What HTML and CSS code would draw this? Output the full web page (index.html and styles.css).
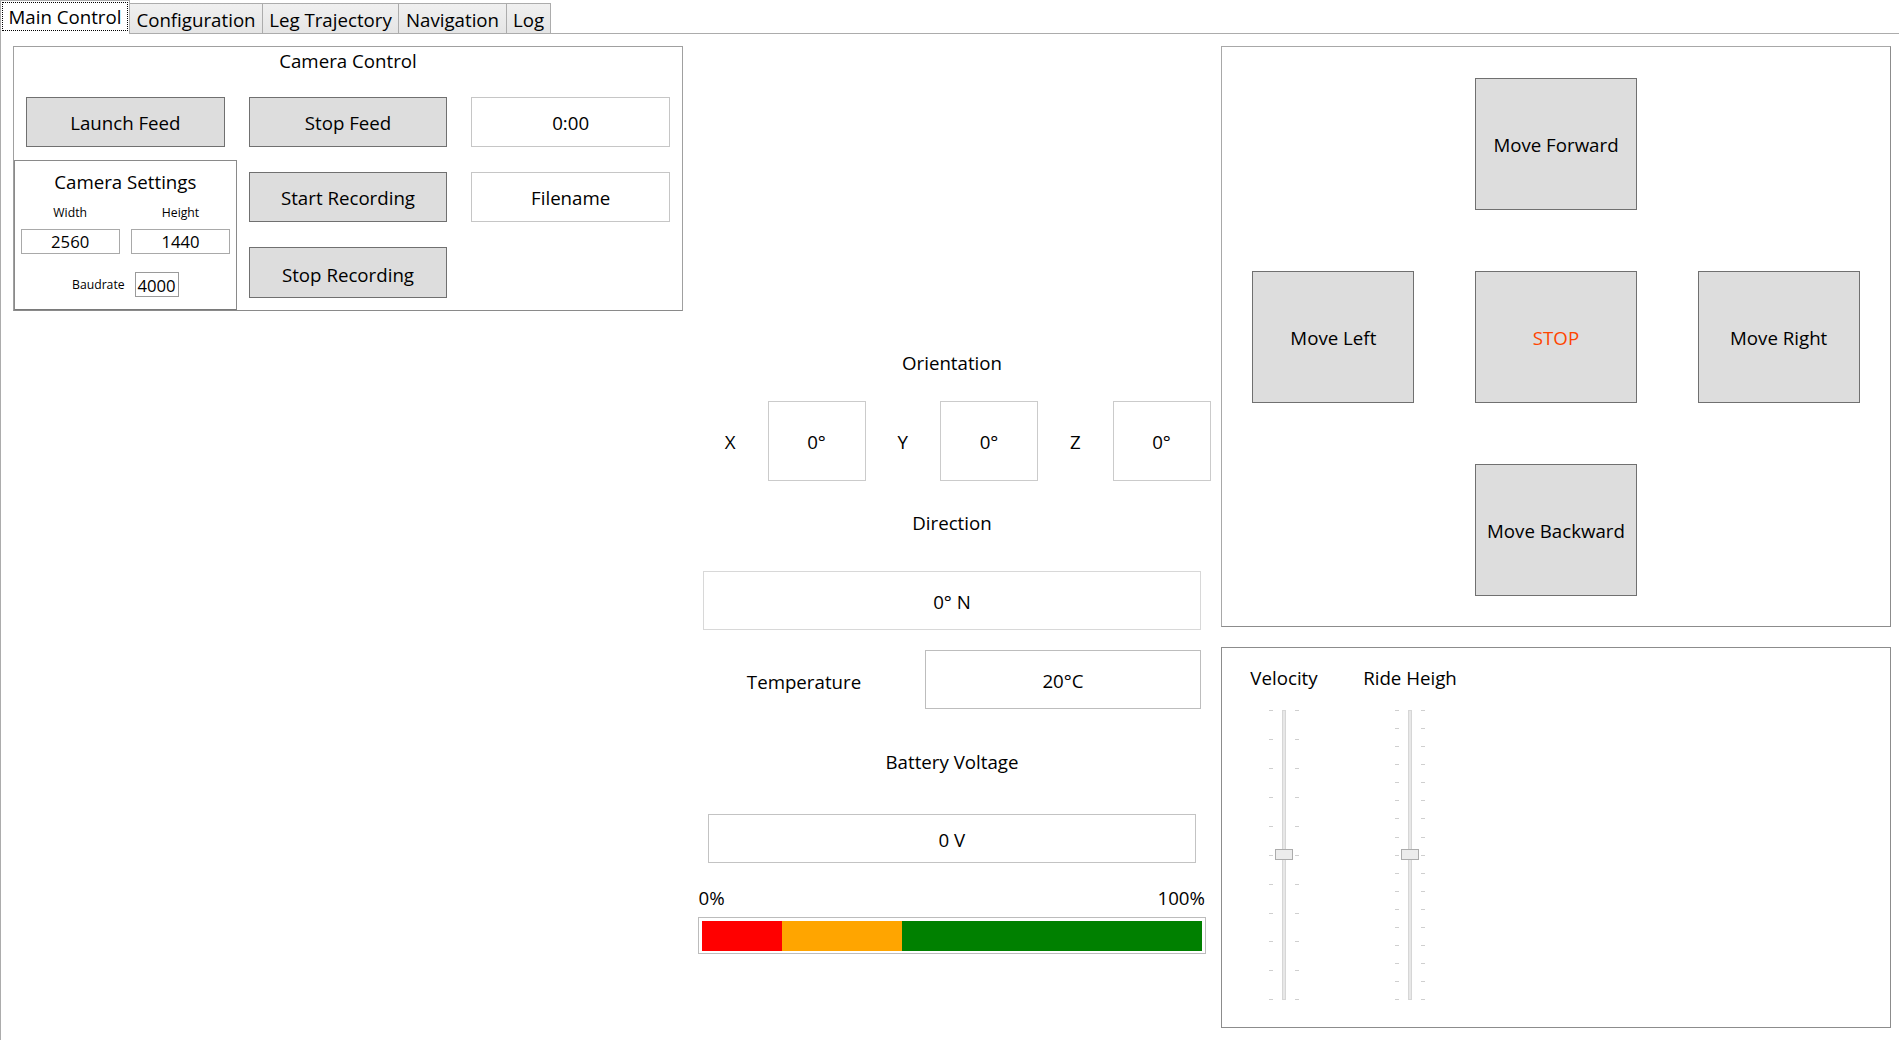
FILE: index.html
```html
<!DOCTYPE html>
<html lang="en">
<head>
<meta charset="utf-8">
<title>Main Control</title>
<link rel="stylesheet" href="styles.css">
</head>
<body>
<div class="app">
  <div class="tabstrip">
    <div class="tab tab-active t-main"><span class="focus">Main Control</span></div>
    <div class="tab t-config">Configuration</div>
    <div class="tab t-leg">Leg Trajectory</div>
    <div class="tab t-nav">Navigation</div>
    <div class="tab t-log">Log</div>
  </div>

  <div class="content">
    <div class="col-left">
      <section class="camera">
        <div class="group-title">Camera Control</div>
        <div class="btn">Launch Feed</div>
        <div class="btn">Stop Feed</div>
        <div class="field">0:00</div>
        <div class="settings">
          <div class="settings-title">Camera Settings</div>
          <div class="small-label">Width</div>
          <div class="small-label">Height</div>
          <div class="input">2560</div>
          <div class="input">1440</div>
          <div class="baud">
            <span class="small-label">Baudrate</span>
            <span class="input input-baud">4000</span>
          </div>
        </div>
        <div class="btn">Start Recording</div>
        <div class="field">Filename</div>
        <div class="btn btn-low">Stop Recording</div>
      </section>
    </div>

    <div class="col-mid">
      <div class="mid-title t-orient">Orientation</div>
      <div class="axes">
        <div class="axis-label">X</div>
        <div class="field">0°</div>
        <div class="axis-label">Y</div>
        <div class="field">0°</div>
        <div class="axis-label">Z</div>
        <div class="field">0°</div>
      </div>
      <div class="mid-title t-dir">Direction</div>
      <div class="field dir-box">0° N</div>
      <div class="temp-row">
        <div class="temp-label">Temperature</div>
        <div class="field temp-box">20°C</div>
      </div>
      <div class="mid-title t-batt">Battery Voltage</div>
      <div class="field volt-box">0 V</div>
      <div class="pct-row">
        <span>0%</span>
        <span>100%</span>
      </div>
      <div class="battery-bar">
        <div class="seg seg-red"></div>
        <div class="seg seg-orange"></div>
        <div class="seg seg-green"></div>
      </div>
    </div>

    <div class="col-right">
      <section class="dpad">
        <div class="btn move fwd">Move Forward</div>
        <div class="btn move mleft">Move Left</div>
        <div class="btn move stop">STOP</div>
        <div class="btn move mright">Move Right</div>
        <div class="btn move back">Move Backward</div>
      </section>
      <section class="sliders">
        <div class="slider-col">
          <div class="slider-label">Velocity</div>
          <svg class="slider" width="40" height="296" viewBox="0 0 40 296">
            <g class="ticks">
              <path d="M5 2.5h4M31 2.5h4M5 31.5h4M31 31.5h4M5 60.5h4M31 60.5h4M5 89.5h4M31 89.5h4M5 118.5h4M31 118.5h4M5 147.5h4M31 147.5h4M5 176.5h4M31 176.5h4M5 205.5h4M31 205.5h4M5 233.5h4M31 233.5h4M5 262.5h4M31 262.5h4M5 291.5h4M31 291.5h4"/>
            </g>
            <rect class="track" x="18.5" y="2.5" width="3" height="289"/>
            <rect class="thumb" x="11.5" y="141.5" width="17" height="10"/>
          </svg>
        </div>
        <div class="slider-col">
          <div class="slider-label">Ride Heigh</div>
          <svg class="slider" width="40" height="296" viewBox="0 0 40 296">
            <g class="ticks">
              <path d="M5 2.5h4M31 2.5h4M5 20.5h4M31 20.5h4M5 38.5h4M31 38.5h4M5 56.5h4M31 56.5h4M5 74.5h4M31 74.5h4M5 92.5h4M31 92.5h4M5 110.5h4M31 110.5h4M5 129.5h4M31 129.5h4M5 147.5h4M31 147.5h4M5 165.5h4M31 165.5h4M5 183.5h4M31 183.5h4M5 201.5h4M31 201.5h4M5 219.5h4M31 219.5h4M5 237.5h4M31 237.5h4M5 255.5h4M31 255.5h4M5 273.5h4M31 273.5h4M5 291.5h4M31 291.5h4"/>
            </g>
            <rect class="track" x="18.5" y="2.5" width="3" height="289"/>
            <rect class="thumb" x="11.5" y="141.5" width="17" height="10"/>
          </svg>
        </div>
      </section>
    </div>
  </div>
</div>
</body>
</html>
```

FILE: styles.css
```css
* { box-sizing: border-box; }
html, body { margin: 0; height: 100%; }
body {
  font-family: "Open Sans", "Noto Sans", "DejaVu Sans", sans-serif;
  font-size: 18.7px;
  color: #000;
  background: #fff;
  overflow: hidden;
}
.app { display: flex; flex-direction: column; height: 100vh; }

/* ---------- tabs ---------- */
.tabstrip {
  display: flex;
  align-items: flex-end;
  height: 34px;
  flex: none;
  border-bottom: 1px solid #acacac;
  font-size: 18.7px;
}
.tab {
  height: 30px;
  margin-left: -1px;
  border: 1px solid #acacac;
  border-bottom: none;
  background: linear-gradient(#f0f0f0, #e5e5e5);
  display: flex;
  align-items: center;
  justify-content: center;
  white-space: nowrap;
  padding-top: 1px;
}
.tab-active {
  height: 34px;
  margin-left: 0;
  margin-bottom: -1px;
  padding: 1px 1px 3px 1px;
  background: #fff;
  position: relative;
  z-index: 1;
}
.focus {
  flex: 1;
  align-self: stretch;
  border: 1px dotted #000;
  display: flex;
  align-items: center;
  justify-content: center;
}
.t-main { width: 130px; }
.t-config { width: 134px; }
.t-leg { width: 137px; }
.t-nav { width: 109px; }
.t-log { width: 45px; }

/* ---------- content ---------- */
.content {
  flex: 1;
  border-left: 1px solid #acacac;
  display: grid;
  grid-template-columns: 670px 1fr 670px;
  padding: 12px 8px 0 12px;
  align-items: start;
}

.btn {
  background: #dddddd;
  border: 1px solid #707070;
  display: flex;
  align-items: center;
  justify-content: center;
  white-space: nowrap;
  padding-top: 1px;
}
.field {
  background: #fff;
  border: 1px solid #c6c6c6;
  display: flex;
  align-items: center;
  justify-content: center;
  white-space: nowrap;
  padding-top: 1px;
}

/* ---------- camera group ---------- */
.camera {
  height: 265px;
  border: 1px solid #a0a0a0;
  border-bottom-color: #8a8a8a;
  display: grid;
  grid-template-columns: repeat(3, 1fr);
  grid-template-rows: 38px 75px 75px 75px;
}
.group-title {
  grid-column: 1 / -1;
  text-align: center;
  line-height: 28px;
}
.camera > .btn,
.camera > .field {
  height: 50px;
  margin: 12px 12px 0;
}
.camera > .btn-low { height: 51px; padding-top: 3px; }
.settings {
  grid-column: 1;
  grid-row: 3 / span 2;
  border: 1px solid #8a8a8a;
  border-bottom-color: #7a7a7a;
  display: grid;
  grid-template-columns: 1fr 1fr;
  grid-template-rows: 40px 23px 34px 1fr;
}
.settings-title {
  grid-column: 1 / -1;
  display: flex;
  align-items: center;
  justify-content: center;
}
.small-label {
  font-size: 12.2px;
  display: flex;
  align-items: center;
  justify-content: center;
}
.input {
  height: 25px;
  margin: 0 5.5px;
  align-self: center;
  border: 1px solid #a9a9a9;
  background: #fff;
  font-size: 16.7px;
  display: flex;
  align-items: center;
  justify-content: center;
  padding-top: 1px;
}
.baud {
  grid-column: 1 / -1;
  display: flex;
  align-items: center;
  justify-content: center;
  gap: 10px;
  padding-top: 2px;
}
.input-baud {
  width: 44px;
  margin: 0;
  border-color: #9a9a9a;
}

/* ---------- middle column ---------- */
.col-mid {
  display: flex;
  flex-direction: column;
  padding: 0 10px;
}
.mid-title {
  height: 28px;
  line-height: 28px;
  text-align: center;
}
.t-orient { margin-top: 303px; }
.t-dir { margin-top: 28px; }
.t-batt { margin-top: 39px; }
.axes {
  margin-top: 24px;
  height: 80px;
  display: grid;
  grid-template-columns: 74.5px 98px 74.5px 98px 74.5px 98px;
}
.axis-label {
  display: flex;
  align-items: center;
  justify-content: center;
  padding-top: 1px;
}
.axes .field { border-color: #cbcbcb; }
.dir-box {
  margin: 34px 10px 0;
  height: 59px;
  border-color: #d8d8d8;
}
.temp-row {
  margin-top: 20px;
  height: 59px;
  display: flex;
}
.temp-label {
  width: 222px;
  display: flex;
  align-items: center;
  justify-content: center;
  padding-top: 3px;
}
.temp-box {
  flex: 1;
  margin: 0 10px;
  border-color: #bdbdbd;
}
.volt-box {
  margin: 38px 15.5px 0 15px;
  height: 49px;
  border-color: #c3c3c3;
}
.pct-row {
  margin: 23px 6px 0 5.5px;
  height: 24px;
  line-height: 24px;
  display: flex;
  justify-content: space-between;
}
.battery-bar {
  margin: 7px 5.5px 0 5px;
  height: 37px;
  border: 1px solid #bcbcbc;
  padding: 2.5px 3px;
  display: flex;
}
.seg { height: 100%; }
.seg-red { flex: 16; background: #ff0000; }
.seg-orange { flex: 24; background: #ffa500; }
.seg-green { flex: 60; background: #008000; }

/* ---------- right column ---------- */
.col-right {
  display: flex;
  flex-direction: column;
  gap: 20px;
}
.dpad {
  height: 581px;
  border: 1px solid #a8a8a8;
  border-right-color: #8c8c8c;
  border-bottom-color: #8c8c8c;
  display: grid;
  grid-template-columns: repeat(3, 1fr);
  grid-template-rows: repeat(3, 1fr);
}
.move {
  width: 162px;
  height: 132px;
  justify-self: center;
  align-self: center;
}
.fwd { grid-area: 1 / 2; }
.mleft { grid-area: 2 / 1; }
.stop { grid-area: 2 / 2; color: #ff4500; }
.mright { grid-area: 2 / 3; }
.back { grid-area: 3 / 2; }

.sliders {
  height: 381px;
  border: 1px solid #8c8c8c;
  display: flex;
  align-items: flex-start;
  gap: 26px;
  padding: 16px 0 0 12px;
}
.slider-col {
  width: 100px;
  display: flex;
  flex-direction: column;
  align-items: center;
}
.slider-label {
  height: 28px;
  line-height: 28px;
  white-space: nowrap;
}
.slider {
  display: block;
  margin-top: 16px;
}
.ticks path { stroke: #cfcfcf; stroke-width: 1; fill: none; }
.track { fill: #e7e7e7; stroke: #d6d6d6; stroke-width: 1; }
.thumb { fill: #ececec; stroke: #acacac; stroke-width: 1; }
```
